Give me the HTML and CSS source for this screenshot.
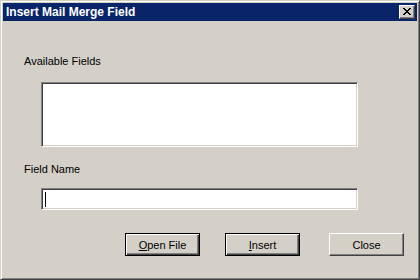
FILE: index.html
```html
<!DOCTYPE html>
<html lang="en">
<head>
    <meta charset="UTF-8">
    <title>Insert Mail Merge Field</title>
    <link rel="stylesheet" href="styles.css">
</head>
<body>
    <div class="window">
        <!-- Title bar -->
        <div class="title-bar">
            <span class="title">Insert Mail Merge Field</span>
            <div class="close-box">
                <svg width="8" height="7" viewBox="0 0 8 7">
                    <path d="M0 0h2v1h1v1h2V1h1V0h2v1H7v1H6v1H5v1h1v1h1v1h1v1H6V6H5V5H3v1H2v1H0V6h1V5h1V4h1V3H2V2H1V1H0z" fill="#000"/>
                </svg>
            </div>
        </div>

        <!-- Content -->
        <div class="content">
            <div class="label">Available Fields</div>
            <div class="listbox"></div>

            <div class="label field-name">Field Name</div>
            <div class="textbox"><span class="caret"></span></div>

            <div class="buttons">
                <button class="btn default open-btn"><u>O</u>pen File</button>
                <button class="btn default insert-btn"><u>I</u>nsert</button>
                <button class="btn close-btn">Close</button>
            </div>
        </div>
    </div>
</body>
</html>
```

FILE: styles.css
```css
/* Classic dialog */
body {
    margin: 0;
    background: #d4d0c8;
    font-family: 'Liberation Sans', Arial, sans-serif;
    font-size: 11px;
    color: #000;
}

.window {
    width: 420px;
    height: 280px;
    box-sizing: border-box;
    background: #d4d0c8;
    border: 1px solid;
    border-color: #d4d0c8 #404040 #404040 #d4d0c8;
    box-shadow: inset 1px 1px #ffffff, inset -1px -1px #808080;
    padding: 2px;
    display: flex;
    flex-direction: column;
}

.title-bar {
    height: 18px;
    background: #0a246a;
    display: flex;
    align-items: center;
    justify-content: space-between;
    padding: 0 2px 0 3px;
}

.title {
    color: #ffffff;
    font-weight: bold;
    font-size: 12px;
    line-height: 14px;
}

.close-box {
    width: 16px;
    height: 14px;
    box-sizing: border-box;
    background: #d4d0c8;
    border: 1px solid;
    border-color: #ffffff #404040 #404040 #ffffff;
    box-shadow: inset -1px -1px #808080;
    display: flex;
    align-items: center;
    justify-content: center;
}

.close-box svg {
    display: block;
    margin: 0 1px 1px 0;
}

.content {
    flex: 1;
    padding: 34px 13px 0 21px;
}

.label {
    line-height: 13px;
}

.listbox,
.textbox {
    margin-left: 17px;
    width: 317px;
    box-sizing: border-box;
    background: #ffffff;
    border: 1px solid;
    border-color: #808080 #ffffff #ffffff #808080;
    box-shadow: inset 1px 1px #404040, inset -1px -1px #d4d0c8;
}

.listbox {
    margin-top: 14px;
    height: 65px;
}

.field-name {
    margin-top: 16px;
}

.textbox {
    margin-top: 12px;
    height: 22px;
    padding: 3px 0 0 3px;
}

.caret {
    display: block;
    width: 1px;
    height: 15px;
    background: #000;
}

.buttons {
    display: flex;
    justify-content: flex-end;
    margin-top: 23px;
}

.btn {
    width: 75px;
    height: 23px;
    box-sizing: border-box;
    background: #d4d0c8;
    font-family: 'Liberation Sans', Arial, sans-serif;
    font-size: 11px;
    color: #000;
    padding: 0;
    border: 1px solid;
    border-color: #ffffff #404040 #404040 #ffffff;
    box-shadow: inset -1px -1px #808080, inset 1px 1px #d4d0c8;
}

.btn.default {
    border: 1px solid #000;
    box-shadow: inset 1px 1px #ffffff, inset -1px -1px #404040, inset -2px -2px #808080;
}

.insert-btn {
    margin-left: 25px;
}

.close-btn {
    margin-left: 29px;
}
```
